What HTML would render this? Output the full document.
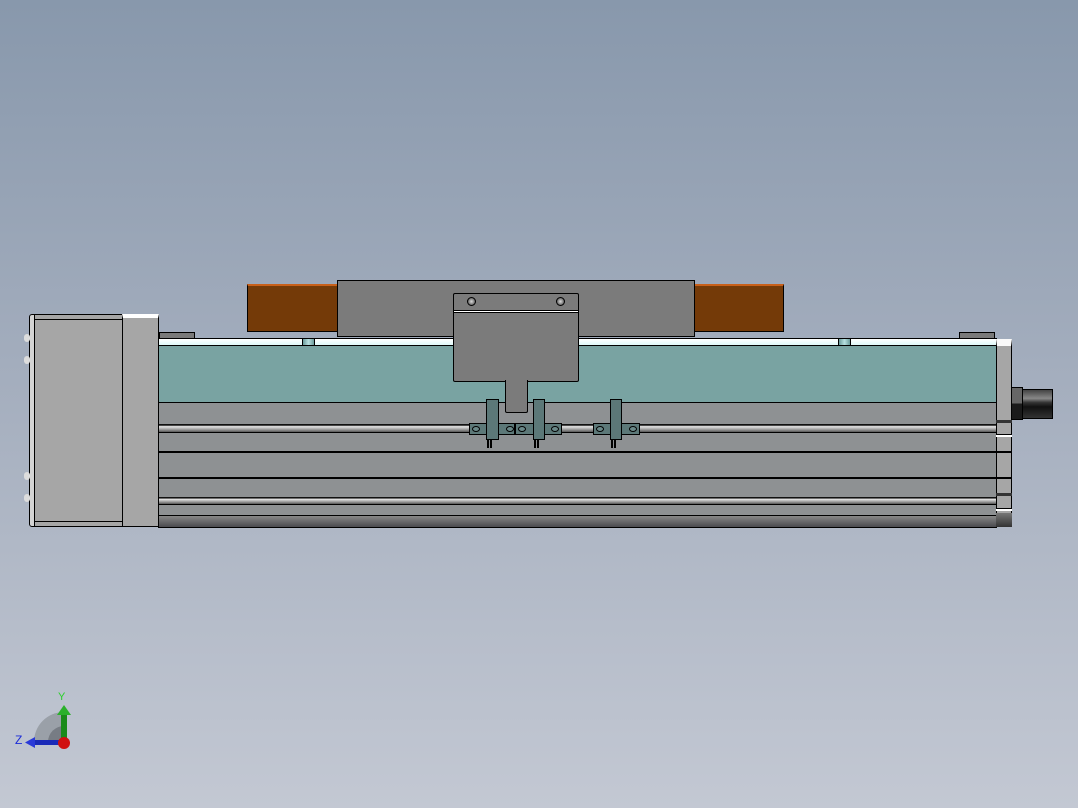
<!DOCTYPE html>
<html><head><style>
body{margin:0;width:1078px;height:808px;overflow:hidden;background:linear-gradient(#8898ac 0%,#a3adbd 45%,#c3c8d3 100%);position:relative;font-family:"Liberation Sans",sans-serif}
div{position:absolute;box-sizing:border-box}
.b{border:1px solid #000}
.h{width:8px;height:6px;border:1px solid #000;border-radius:50%;background:#6a8888}
</style></head><body>
<div class="b" style="left:159px;top:332px;width:36px;height:7px;background:#7a7a7a"></div>
<div class="b" style="left:959px;top:332px;width:36px;height:7px;background:#7a7a7a"></div>
<div class="b" style="left:247px;top:284px;width:91px;height:48px;background:#743a08;border-top:2px solid #c8601a"></div>
<div class="b" style="left:694px;top:284px;width:90px;height:48px;background:#743a08;border-top:2px solid #c8601a"></div>
<div class="b" style="left:337px;top:280px;width:358px;height:57px;background:#7b7b7b"></div>
<div class="b" style="left:158px;top:338px;width:839px;height:190px;background:#8e9193"></div>
<div style="left:159px;top:339px;width:837px;height:7px;background:linear-gradient(#fff,#dffafa);border-bottom:1px solid #000"></div>
<div style="left:159px;top:346px;width:837px;height:57px;background:#79a3a2;border-bottom:1px solid #000"></div>
<div style="left:302px;top:338px;width:13px;height:8px;background:linear-gradient(90deg,#6a9a9a,#b8e0e0,#6a9a9a);border:1px solid #000"></div>
<div style="left:838px;top:338px;width:13px;height:8px;background:linear-gradient(90deg,#6a9a9a,#b8e0e0,#6a9a9a);border:1px solid #000"></div>
<div style="left:159px;top:424px;width:837px;height:9px;background:linear-gradient(#111 0,#111 15%,#e8e8e8 30%,#999 70%,#555);border-bottom:1px solid #000"></div>
<div style="left:159px;top:451px;width:837px;height:2px;background:#000"></div>
<div style="left:159px;top:477px;width:837px;height:2px;background:#000"></div>
<div style="left:159px;top:497px;width:837px;height:8px;background:linear-gradient(#111 0,#111 15%,#e8e8e8 30%,#999 70%,#555);border-bottom:1px solid #000"></div>
<div style="left:159px;top:515px;width:837px;height:12px;background:linear-gradient(#888,#4a4a4e);border-top:1px solid #000"></div>
<div class="b" style="left:29px;top:314px;width:6px;height:213px;background:#d4d4d4;border-radius:3px 0 0 3px"></div>
<div class="b" style="left:34px;top:314px;width:89px;height:213px;background:#a6a6a6"></div>
<div style="left:35px;top:319px;width:87px;height:1px;background:#000"></div>
<div style="left:35px;top:521px;width:87px;height:1px;background:#000"></div>
<div class="b" style="left:122px;top:314px;width:37px;height:213px;background:#a6a6a6;border-top:4px solid #fff"></div>
<div style="left:24px;top:334px;width:6px;height:8px;background:#ddd;border-radius:3px"></div>
<div style="left:24px;top:356px;width:6px;height:8px;background:#ddd;border-radius:3px"></div>
<div style="left:24px;top:472px;width:6px;height:8px;background:#ddd;border-radius:3px"></div>
<div style="left:24px;top:494px;width:6px;height:8px;background:#ddd;border-radius:3px"></div>
<div class="b" style="left:996px;top:339px;width:16px;height:188px;background:#a6a6a6;border-top:7px solid #fafafa"></div>
<div style="left:996px;top:420px;width:16px;height:3px;background:#333"></div>
<div style="left:996px;top:434px;width:16px;height:3px;background:#fff;border-top:1px solid #000"></div>
<div style="left:996px;top:451px;width:16px;height:2px;background:#000"></div>
<div style="left:996px;top:477px;width:16px;height:2px;background:#000"></div>
<div style="left:996px;top:493px;width:16px;height:3px;background:#333"></div>
<div style="left:996px;top:508px;width:16px;height:3px;background:#fff;border-top:1px solid #000"></div>
<div style="left:996px;top:513px;width:16px;height:14px;background:linear-gradient(#777,#333)"></div>
<div class="b" style="left:1011px;top:387px;width:12px;height:33px;background:linear-gradient(#666 50%,#1a1a1a 50%)"></div>
<div class="b" style="left:1022px;top:389px;width:31px;height:30px;background:linear-gradient(#444,#888 30%,#333 45%,#111 60%,#333)"></div>
<div class="b" style="left:453px;top:293px;width:126px;height:89px;background:#7b7b7b;border-radius:2px"></div>
<div style="left:454px;top:310px;width:124px;height:3px;background:#fff;border-top:1px solid #000;border-bottom:1px solid #000"></div>
<div style="left:467px;top:297px;width:9px;height:9px;border-radius:50%;background:radial-gradient(#ddd,#333);border:1px solid #000"></div>
<div style="left:556px;top:297px;width:9px;height:9px;border-radius:50%;background:radial-gradient(#ddd,#333);border:1px solid #000"></div>
<div class="b" style="left:505px;top:380px;width:23px;height:33px;background:#7b7b7b;border-top:none;border-radius:0 0 2px 2px"></div>
<div class="b" style="left:469px;top:423px;width:46px;height:12px;background:#5c7878"></div>
<div class="b" style="left:515px;top:423px;width:47px;height:12px;background:#5c7878"></div>
<div class="b" style="left:593px;top:423px;width:47px;height:12px;background:#5c7878"></div>
<div class="h" style="left:472px;top:426px"></div>
<div class="h" style="left:506px;top:426px"></div>
<div class="h" style="left:518px;top:426px"></div>
<div class="h" style="left:551px;top:426px"></div>
<div class="h" style="left:596px;top:426px"></div>
<div class="h" style="left:629px;top:426px"></div>
<div class="b" style="left:486px;top:399px;width:13px;height:41px;background:#5c7878"></div>
<div class="b" style="left:533px;top:399px;width:12px;height:41px;background:#5c7878"></div>
<div class="b" style="left:610px;top:399px;width:12px;height:41px;background:#5c7878"></div>
<div style="left:487px;top:440px;width:5px;height:8px;border-left:2px solid #000;border-right:2px solid #000"></div>
<div style="left:534px;top:440px;width:5px;height:8px;border-left:2px solid #000;border-right:2px solid #000"></div>
<div style="left:611px;top:440px;width:5px;height:8px;border-left:2px solid #000;border-right:2px solid #000"></div>
<svg style="position:absolute;left:10px;top:685px" width="70" height="70">
<path d="M24 57 A30 30 0 0 1 54 27 L54 57Z" fill="#9aa0a8"/>
<path d="M38 57 A16 16 0 0 1 54 41 L54 57Z" fill="#777c84"/>
<rect x="51" y="27" width="6" height="28" fill="#1a8a1a"/>
<path d="M47 30 L54 20 L61 30Z" fill="#2ab02a"/>
<rect x="24" y="55" width="30" height="5" fill="#1a2ab8"/>
<path d="M25 52 L15 57.5 L25 63Z" fill="#2a3ad8"/>
<circle cx="54" cy="58" r="6" fill="#d01010"/>
<text x="48" y="15" font-size="11" fill="#2ad02a" font-family="Liberation Sans">Y</text>
<text x="5" y="59" font-size="12" fill="#1a2ad8" font-family="Liberation Sans">Z</text>
</svg>
</body></html>
